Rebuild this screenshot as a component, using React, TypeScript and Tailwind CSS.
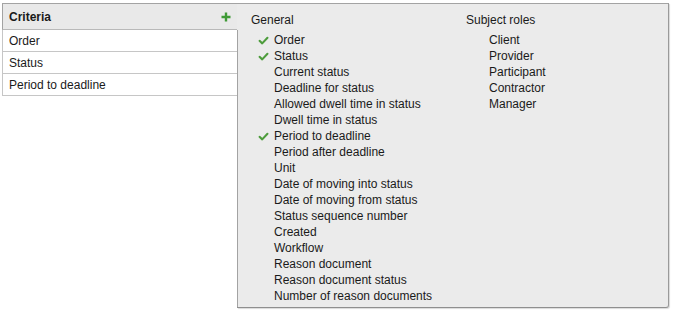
import { useState } from "react";

const criteria = ["Order", "Status", "Period to deadline"];

const generalFields = [
  "Order",
  "Status",
  "Current status",
  "Deadline for status",
  "Allowed dwell time in status",
  "Dwell time in status",
  "Period to deadline",
  "Period after deadline",
  "Unit",
  "Date of moving into status",
  "Date of moving from status",
  "Status sequence number",
  "Created",
  "Workflow",
  "Reason document",
  "Reason document status",
  "Number of reason documents",
];

const subjectRoles = ["Client", "Provider", "Participant", "Contractor", "Manager"];

function CheckIcon() {
  return (
    <svg viewBox="0 0 12 10" className="block w-[11px] h-[9px]" aria-hidden="true">
      <path
        d="M1.6 5.4 L4.6 8.2 L10.4 2"
        fill="none"
        stroke="#4d9c3c"
        strokeWidth="2.3"
        strokeLinecap="round"
        strokeLinejoin="round"
      />
    </svg>
  );
}

function PlusIcon() {
  return (
    <svg viewBox="0 0 10 10" className="block w-[10px] h-[10px]" aria-hidden="true">
      <path d="M5 0.5 V9.5 M0.5 5 H9.5" stroke="#3f9a36" strokeWidth="2.4" />
    </svg>
  );
}

export default function App() {
  const [selected] = useState(new Set(criteria));

  return (
    <div className="w-[673px] h-[313px] bg-white pl-[2px] pt-[3px] font-['Liberation_Sans',Arial,sans-serif] text-[12px] text-[#1a1a1a]">
      <div className="flex">
        {/* Criteria list */}
        <div className="w-[235px] shrink-0">
          <div className="h-[27px] bg-[#e9e9e9] border-t border-l border-[#a3a3a3] border-b border-b-[#b9b9b9] flex items-center justify-between pl-[6px] pr-[6px]">
            <span className="font-bold">Criteria</span>
            <PlusIcon />
          </div>
          {criteria.map((c) => (
            <div
              key={c}
              className="h-[22px] border-l border-b border-[#c6c6c6] bg-white flex items-center pl-[6px]"
            >
              {c}
            </div>
          ))}
        </div>

        {/* Field picker dropdown */}
        <div className="w-[432px] h-[305px] flex bg-[#ebebeb] border-t border-r border-b border-t-[#a3a3a3] border-r-[#9a9a9a] border-b-[#8f8f8f] rounded-br-[3px] shadow-[1px_1px_1px_rgba(0,0,0,0.15)]">
          <div className="w-px flex flex-col shrink-0">
            <div className="h-[26px]" />
            <div className="flex-1 bg-[#a3a3a3]" />
          </div>
          <div className="flex pl-[13px] pt-[8px]">
            <div className="w-[215px]">
              <div className="h-[16px] leading-[16px] mb-[4px]">General</div>
              {generalFields.map((f) => (
                <div key={f} className="flex items-center h-[16px] leading-[16px]">
                  <span className="w-[23px] pl-[7px] flex items-center">
                    {selected.has(f) && <CheckIcon />}
                  </span>
                  <span>{f}</span>
                </div>
              ))}
            </div>
            <div>
              <div className="h-[16px] leading-[16px] mb-[4px]">Subject roles</div>
              {subjectRoles.map((r) => (
                <div key={r} className="h-[16px] leading-[16px] pl-[23px]">
                  {r}
                </div>
              ))}
            </div>
          </div>
        </div>
      </div>
    </div>
  );
}
